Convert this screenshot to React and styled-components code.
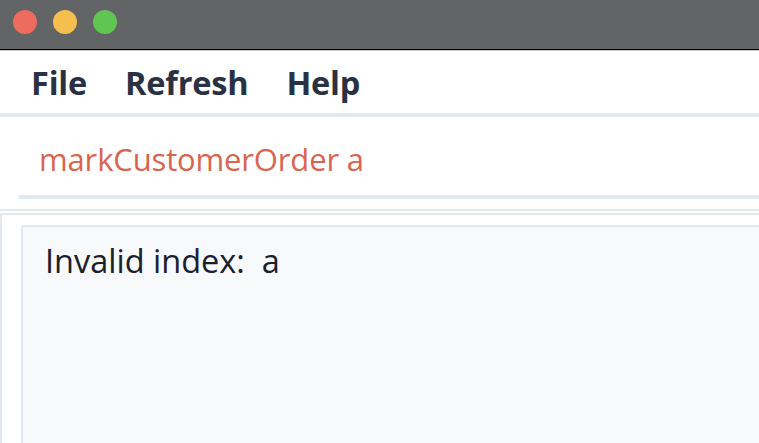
import React from "react";
import styled, { createGlobalStyle } from "styled-components";

const Global = createGlobalStyle`
  html, body { margin: 0; padding: 0; background: #ffffff; }
  body { font-family: "Open Sans", "Noto Sans", sans-serif; overflow: hidden; }
`;

const Window = styled.div`
  width: 759px;
  height: 443px;
  display: flex;
  flex-direction: column;
  background: #ffffff;
  overflow: hidden;
`;

const TitleWrap = styled.div`
  border-bottom: 1px solid #c9c9cb;
`;

const TitleBar = styled.div`
  height: 50px;
  background: #636466;
  border-bottom: 1px solid #000000;
  display: flex;
  align-items: center;
  gap: 16px;
  padding: 0 0 6px 13px;
  box-sizing: border-box;
`;

const Light = styled.span`
  width: 24px;
  height: 24px;
  border-radius: 50%;
  background: ${(p) => p.$color};
`;

const MenuBar = styled.nav`
  height: 62px;
  border-bottom: 4px solid #e2e8f0;
  display: flex;
  align-items: center;
  gap: 38px;
  padding-left: 31px;
  box-sizing: content-box;
`;

const MenuItem = styled.span`
  font-family: "Open Sans", "Noto Sans", sans-serif;
  font-weight: 700;
  font-size: 32.5px;
  color: #2a3142;
  letter-spacing: -0.2px;
`;

const CommandFrame = styled.div`
  margin-left: 19px;
  border-bottom: 4px solid #e2e8f0;
`;

const CommandBox = styled.div`
  height: 78px;
  box-sizing: border-box;
  padding: 6px 0 0 20px;
  display: flex;
  align-items: center;
`;

const CommandText = styled.span`
  font-size: 31px;
  color: #d7654f;
  letter-spacing: -0.15px;
`;

const Divider = styled.div`
  margin-top: 10px;
  height: 2px;
  background: #e2e8f0;
`;

const ResultPanel = styled.div`
  margin-top: 2px;
  flex: 1;
  border-top: 2px solid #e2e8f0;
  border-left: 2px solid #e2e8f0;
  padding: 10px 0 0 19px;
  display: flex;
`;

const ResultBox = styled.div`
  flex: 1;
  background: #f7f9fb;
  border-top: 2px solid #e2e8f0;
  border-left: 2px solid #e2e8f0;
  border-top-left-radius: 3px;
  padding: 11px 0 0 22px;
`;

const ResultText = styled.pre`
  margin: 0;
  font-family: "Open Sans", "Noto Sans", sans-serif;
  font-size: 32.5px;
  color: #1a202c;
  letter-spacing: 0;
`;

export default function App() {
  return (
    <>
      <Global />
      <Window>
        <TitleWrap>
          <TitleBar>
            <Light $color="#ed6b5f" />
            <Light $color="#f5bf4f" />
            <Light $color="#61c554" />
          </TitleBar>
        </TitleWrap>
        <MenuBar>
          <MenuItem>File</MenuItem>
          <MenuItem>Refresh</MenuItem>
          <MenuItem>Help</MenuItem>
        </MenuBar>
        <CommandFrame>
          <CommandBox>
            <CommandText>markCustomerOrder a</CommandText>
          </CommandBox>
        </CommandFrame>
        <Divider />
        <ResultPanel>
          <ResultBox>
            <ResultText>Invalid index:  a</ResultText>
          </ResultBox>
        </ResultPanel>
      </Window>
    </>
  );
}
